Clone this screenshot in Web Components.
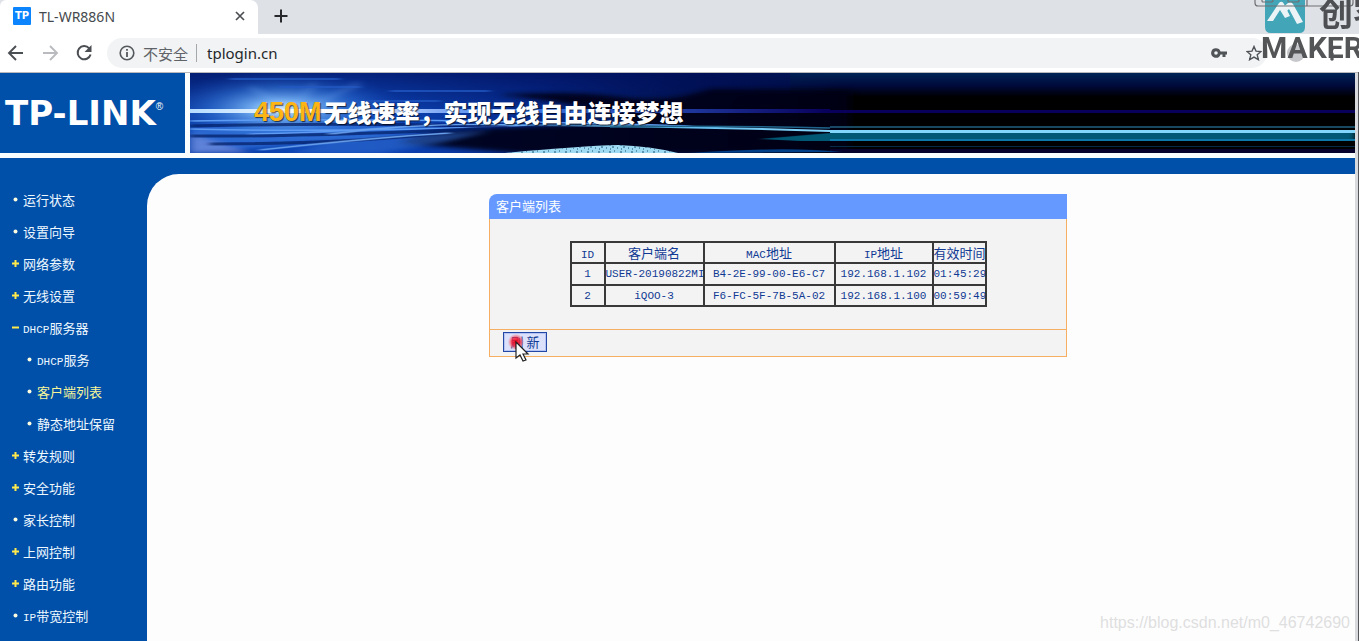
<!DOCTYPE html>
<html lang="zh-CN">
<head>
<meta charset="utf-8">
<title>TL-WR886N</title>
<style>
html,body{margin:0;height:100%}
body{overflow:hidden;background:#fdfdfe;font-family:"Liberation Sans","Noto Sans CJK SC",sans-serif;font-size:13px}
</style>
</head>
<body>
<app-window>
  <browser-tabs slot="chrome">TL-WR886N</browser-tabs>
  <browser-toolbar slot="chrome" address="tplogin.cn">不安全</browser-toolbar>
  <router-banner slot="page"><span slot="hot">450M</span>无线速率，实现无线自由连接梦想</router-banner>
  <router-body slot="page">
    <nav-item slot="nav" kind="dot">运行状态</nav-item>
    <nav-item slot="nav" kind="dot">设置向导</nav-item>
    <nav-item slot="nav" kind="plus">网络参数</nav-item>
    <nav-item slot="nav" kind="plus">无线设置</nav-item>
    <nav-item slot="nav" kind="minus" latin="DHCP">服务器</nav-item>
    <nav-item slot="nav" kind="dot" sub latin="DHCP">服务</nav-item>
    <nav-item slot="nav" kind="dot" sub current>客户端列表</nav-item>
    <nav-item slot="nav" kind="dot" sub>静态地址保留</nav-item>
    <nav-item slot="nav" kind="plus">转发规则</nav-item>
    <nav-item slot="nav" kind="plus">安全功能</nav-item>
    <nav-item slot="nav" kind="dot">家长控制</nav-item>
    <nav-item slot="nav" kind="plus">上网控制</nav-item>
    <nav-item slot="nav" kind="plus">路由功能</nav-item>
    <nav-item slot="nav" kind="dot" latin="IP">带宽控制</nav-item>
    <list-panel>
      <span slot="title">客户端列表</span>
      <client-table></client-table>
      <refresh-button slot="actions">刷 新</refresh-button>
    </list-panel>
  </router-body>
  <maker-mark slot="over"></maker-mark>
  <blog-mark slot="over">https://blog.csdn.net/m0_46742690</blog-mark>
</app-window>
<script>
function define(name, html, setup) {
  const tpl = document.createElement('template');
  tpl.innerHTML = html;
  customElements.define(name, class extends HTMLElement {
    constructor() {
      super();
      this.attachShadow({mode: 'open'}).append(tpl.content.cloneNode(true));
    }
    connectedCallback() { if (setup) setup(this, this.shadowRoot); }
  });
}

define('app-window', `
<style>
:host{display:flex;flex-direction:column;height:100vh;position:relative;overflow:hidden}
.page{flex:1;display:flex;flex-direction:column;min-height:0;border-right:3px solid #d9dade;margin-right:1px}
.edge{position:absolute;right:0;top:72px;bottom:0;width:1px;background:#55565a}
</style>
<slot name="chrome"></slot>
<div class="page"><slot name="page"></slot></div>
<div class="edge"></div>
<slot name="over"></slot>`);

define('browser-tabs', `
<style>
:host{display:flex;align-items:stretch;height:34px;flex:none;background:#dee1e6}
.tab{display:flex;align-items:center;width:258px;box-sizing:border-box;padding:0 12px 2px 13px;gap:8px;background:#fff;border-radius:6px 8px 0 0;color:#45494d;font:14px "Noto Sans",sans-serif}
.name{flex:1}
button{border:0;background:none;padding:0;display:flex}
.add{padding:0 16px 2px;align-items:center}
</style>
<div class="tab">
<svg width="18" height="18"><rect width="18" height="18" rx="1" fill="#0b84fe"/><text x="9" y="12" text-anchor="middle" font-family="DejaVu Sans" font-weight="700" font-size="10" fill="#fff">TP</text></svg>
<span class="name"><slot></slot></span>
<button aria-label="关闭"><svg width="12" height="12" viewBox="0 0 12 12"><path d="M2 2l8 8M10 2l-8 8" stroke="#4b4f53" stroke-width="1.700"/></svg></button>
</div>
<button class="add" aria-label="新标签页"><svg width="14" height="14" viewBox="0 0 14 14"><path d="M7 .5v13M.5 7h13" stroke="#26282b" stroke-width="2"/></svg></button>`);

define('browser-toolbar', `
<style>
:host{display:flex;align-items:center;height:38px;flex:none;background:#fff;border-bottom:1px solid #b9b9bb;padding:0 92px 0 7px;box-sizing:content-box}
.nav{display:flex;gap:16px;padding-right:14px}
button{border:0;background:none;padding:0;display:flex}
form{flex:1;display:flex;align-items:center;height:30px;border-radius:15px;background:#f1f3f4;margin:0;padding:0 5px 0 12px;font:15px "Noto Sans","Noto Sans CJK SC",sans-serif;color:#5f6368}
.state{margin:0 8px}
.sep{width:1px;height:18px;background:#a5a8ab}
input{flex:1;min-width:0;border:0;background:none;padding:0 10px;font:15px "Noto Sans",sans-serif;color:#25282b;outline:0}
.tools{display:flex;gap:19px;align-items:center}
</style>
<div class="nav">
<button aria-label="后退"><svg width="18" height="18" viewBox="0 0 18 18" fill="none" stroke="#4b4e52" stroke-width="1.900"><path d="M16 9H2M9 2L2 9l7 7"/></svg></button>
<button aria-label="前进"><svg width="18" height="18" viewBox="0 0 18 18" fill="none" stroke="#b9bbbe" stroke-width="1.900"><path d="M2 9h14M9 2l7 7-7 7"/></svg></button>
<button aria-label="重新加载"><svg width="18" height="18" viewBox="0 0 18 18"><path d="M14.2 4.3A6.6 6.6 0 1 0 15.6 10.500" fill="none" stroke="#4b4e52" stroke-width="2"/><path d="M16.500 1v7H9.500z" fill="#4b4e52"/></svg></button>
</div>
<form>
<svg width="16" height="16" viewBox="0 0 16 16"><circle cx="8" cy="8" r="6.800" fill="none" stroke="#54575b" stroke-width="1.600"/><path d="M8 7v5M8 4v1.800" stroke="#54575b" stroke-width="1.800"/></svg>
<span class="state"><slot></slot></span><span class="sep"></span>
<input aria-label="地址">
<span class="tools">
<svg width="16" height="12" viewBox="0 0 16 12"><path d="M5 1.200a4.800 4.800 0 1 0 4.500 6.300h2V10h3V7.500H16v-3H9.500A4.800 4.800 0 0 0 5 1.200zm0 3a1.800 1.800 0 1 1 0 3.600 1.800 1.800 0 0 1 0-3.600z" fill="#505357"/></svg>
<svg width="16" height="16" viewBox="0 0 16 16"><path d="M8 1.500l2 4.600 5 .4-3.800 3.300 1.200 4.900L8 12.100l-4.400 2.600 1.200-4.900L1 6.500l5-.4z" fill="none" stroke="#505357" stroke-width="1.400"/></svg>
</span>
</form>`, (el, root) => { root.querySelector('input').value = el.getAttribute('address'); });

define('router-banner', `
<style>
:host{display:grid;grid-template-columns:185px 1fr;gap:5px;height:80px;flex:none;padding-bottom:5px;background:#fafeff}
.brand{background:#004fa8;display:flex;align-items:center;padding-left:5px;color:#fff;font:bold 34px "DejaVu Sans",sans-serif;text-decoration:none}
sup{font:10px "Liberation Sans",sans-serif;align-self:flex-start;margin-top:28px}
.art{display:grid;overflow:hidden;background:#000}
.art>*{grid-area:1/1}
svg{width:100%;height:80px;display:block}
h1{margin:0 0 2px;padding-left:64px;align-self:center;display:flex;align-items:center;font:900 24px/32px "Noto Sans CJK SC",sans-serif;color:#fff;white-space:nowrap;text-shadow:1px 1px 1px #000a;z-index:1}
.hot{font:bold 27px/32px "Liberation Sans",sans-serif;color:#fdb515;padding-right:2px}
</style>
<a class="brand" href="#">TP-LINK<sup>®</sup></a>
<div class="art">
<svg viewBox="0 0 1165 80" preserveAspectRatio="none">
<defs>
<linearGradient id="sky" x2="0" y2="1"><stop offset="0" stop-color="#002456"/><stop offset=".16" stop-color="#00093a"/><stop offset=".3" stop-color="#000"/><stop offset="1" stop-color="#000"/></linearGradient>
<linearGradient id="sea" x2="1" y2="0"><stop offset="0" stop-color="#0a3da5"/><stop offset=".25" stop-color="#0d48bb"/><stop offset=".55" stop-color="#05298a"/><stop offset=".8" stop-color="#01165c" stop-opacity=".8"/><stop offset="1" stop-color="#001a50" stop-opacity="0"/></linearGradient>
<linearGradient id="top" x2="0" y2="1"><stop offset="0" stop-color="#000a52" stop-opacity=".6"/><stop offset="1" stop-color="#000a52" stop-opacity="0"/></linearGradient>
<radialGradient id="sun"><stop offset="0" stop-color="#e8f6ff"/><stop offset=".25" stop-color="#7db9f8" stop-opacity=".85"/><stop offset=".6" stop-color="#3b80e0" stop-opacity=".45"/><stop offset="1" stop-color="#1545b0" stop-opacity="0"/></radialGradient>
<linearGradient id="line" x2="1" y2="0"><stop offset="0" stop-color="#b6dcff"/><stop offset=".2" stop-color="#fff"/><stop offset=".5" stop-color="#3b7cf0"/><stop offset="1" stop-color="#08005a"/></linearGradient>
<linearGradient id="cyan" x2="1" y2="0"><stop offset="0" stop-color="#80c8ff" stop-opacity="0"/><stop offset=".5" stop-color="#5ab5e8"/><stop offset="1" stop-color="#83d6fb"/></linearGradient>
<filter id="b1" x="-20%" y="-50%" width="140%" height="200%"><feGaussianBlur stdDeviation="5 2"/></filter>
<filter id="b2" x="-20%" y="-50%" width="140%" height="200%"><feGaussianBlur stdDeviation="3 .6"/></filter>
<pattern id="foam" width="11" height="7" patternUnits="userSpaceOnUse"><path d="M1 2h2M6 1h1M4 4h2M9 5h1M2 6h1" stroke="#174c72" stroke-width="1"/></pattern>
</defs>
<rect width="1165" height="80" fill="url(#sky)"/>
<rect width="650" height="80" fill="url(#sea)"/>
<rect width="600" height="40" fill="url(#top)"/>
<path d="M310 22Q380 17 430 24T520 16L660 18V80H330L210 70Q240 56 330 54L440 50Q400 30 310 22z" fill="#000112" opacity=".9" filter="url(#b1)"/>
<g filter="url(#b1)">
<path d="M0 54Q150 48 260 54L170 66Q90 72 0 80z" fill="#3478e0" opacity=".75"/>
<path d="M100 80L150 66 300 58 250 70 190 80z" fill="#2c68cc" opacity=".6"/>
<path d="M10 64l50 16H0V62z" fill="#8293dc" opacity=".6"/>
</g>
<ellipse cx="92" cy="36" rx="125" ry="38" fill="url(#sun)"/>
<path d="M100 38L60 14M110 38L170 10M100 38L125 10" stroke="#79aef6" stroke-width="5" opacity=".25" filter="url(#b1)"/>
<rect y="36" width="640" height="4" fill="url(#line)"/><rect x="640" y="37" width="525" height="3" fill="#08005a"/>
<g fill="none" filter="url(#b2)">
<path d="M0 48Q180 44 500 53M0 56q160 4 340-4M60 61q100-2 180-10" stroke="#5f9cf3" stroke-width="1.500"/>
<path d="M0 53q180-4 320 1M0 63q120 1 300-8M20 71q140 0 240-12" stroke="#001761" stroke-width="3" opacity=".7"/>
<path d="M140 61q90-12 190-9M70 77q120-13 190-17" stroke="#6ca4ef" stroke-width="1.300"/>
<path d="M90 14h80M40 6h110M200 18h100M180 28h70" stroke="#2459c4" stroke-width="1.300"/>
</g>
<path d="M270 52Q410 51 640 58" fill="none" stroke="url(#cyan)" stroke-width="2"/>
<path d="M420 54Q520 52 640 55" fill="none" stroke="#1e638a" stroke-width="1.500"/>
<path d="M640 54h525" stroke="#216181" stroke-width="1.500"/>
<path d="M570 66l70-6h525v8H610z" fill="#005875" filter="url(#b2)"/>
<rect x="640" y="57" width="525" height="3" fill="#83d6fb"/>
<rect x="640" y="66" width="525" height="2" fill="#0d78a8"/>
<rect x="640" y="73" width="525" height="1" fill="#052b49"/>
<rect x="640" y="76" width="525" height="4" fill="#06022b"/>
<path d="M500 80q100-7 150-1z" fill="#063f89" filter="url(#b2)"/>
<path d="M315 80Q390 73 428 72q32 1 60 8z" fill="#9fdcf4"/><path d="M315 80Q390 73 428 72q32 1 60 8z" fill="url(#foam)"/>
</svg>
<h1><span class="hot"><slot name="hot"></slot></span><slot></slot></h1>
</div>`);

define('router-body', `
<style>
:host{flex:1;display:grid;grid-template-columns:147px 1fr;min-height:0;background:#004fa8}
nav{padding-top:25px}
main{margin-top:16px;padding:20px 0 0 54px;background:#fdfdfe;border-top-left-radius:32px;display:flex;justify-content:center;align-items:flex-start}
</style>
<nav><slot name="nav"></slot></nav>
<main><slot></slot></main>`);

define('nav-item', `
<style>
:host{display:block;height:32px;padding-left:12px}
:host([sub]){padding-left:26px}
a{display:flex;align-items:center;gap:4px;height:32px;color:#eef8ff;text-decoration:none;font:13px "Noto Sans CJK SC",sans-serif;white-space:nowrap}
:host([current]) a{color:#f6f59a}
svg{width:7px;height:7px;flex:none}
.latin:not(:empty){font:11px/12px "Liberation Mono",monospace}
</style>
<a href="#"><svg viewBox="0 0 7 7"></svg><span><span class="latin"></span><slot></slot></span></a>`, (el, root) => {
  const marks = {
    dot: '<circle cx="3.500" cy="3.500" r="2" fill="#fffde0"/>',
    plus: '<path d="M3.500 0v7M0 3.500h7" stroke="#ffe94d" stroke-width="2"/>',
    minus: '<path d="M0 3.500h7" stroke="#ffe94d" stroke-width="2"/>'
  };
  root.querySelector('svg').innerHTML = marks[el.getAttribute('kind')];
  root.querySelector('.latin').textContent = el.getAttribute('latin') || '';
});

define('list-panel', `
<style>
:host{display:block;width:578px}
header{height:25px;line-height:24px;padding-left:7px;background:#6699ff;border-top-left-radius:8px;color:#fff;font-family:"Noto Sans CJK SC",sans-serif;font-size:13px}
section,footer{border:1px solid #f5ae62;border-top:0;background:#f3f3f3}
section{padding:22px 0;display:flex;justify-content:center}
footer{padding:2px 13px 4px;display:flex}
</style>
<header><slot name="title"></slot></header>
<section><slot></slot></section>
<footer><slot name="actions"></slot></footer>`);

define('client-table', `
<style>
:host{display:block}
table{border-collapse:collapse;table-layout:fixed;width:417px;color:#103a94;text-align:center}
th,td{border:2px solid #393939;padding:0;height:19px;line-height:18px;white-space:nowrap;font-weight:400}
tbody tr:first-child td{height:20px}
th{font-family:"Noto Sans CJK SC",sans-serif;font-size:13px}
td,th span{font-family:"Liberation Mono",monospace;font-size:11px}
th span{line-height:12px}
.id{width:32px}.name{width:97px}.mac{width:129px}.ip{width:96px}
</style>
<table>
<thead><tr><th class="id"><span>ID</span></th><th class="name">客户端名</th><th class="mac"><span>MAC</span>地址</th><th class="ip"><span>IP</span>地址</th><th>有效时间</th></tr></thead>
<tbody>
<tr><td>1</td><td>USER-20190822MI</td><td>B4-2E-99-00-E6-C7</td><td>192.168.1.102</td><td>01:45:29</td></tr>
<tr><td>2</td><td>iQOO-3</td><td>F6-FC-5F-7B-5A-02</td><td>192.168.1.100</td><td>00:59:49</td></tr>
</tbody>
</table>`);

define('refresh-button', `
<style>
:host{display:block;position:relative}
button{display:block;width:44px;height:20px;padding:0;border:1px solid #2347a5;background:#dbe1fa;color:#103a94;font:13px/18px "Noto Sans CJK SC",sans-serif;box-shadow:inset 0 0 0 1px #b5c4f3}
svg{position:absolute;left:3px;top:0}
</style>
<button><slot></slot></button>
<svg width="26" height="32" viewBox="0 0 26 32"><defs><radialGradient id="r"><stop offset="0" stop-color="#f00018"/><stop offset=".55" stop-color="#f82038" stop-opacity=".8"/><stop offset="1" stop-color="#ff7080" stop-opacity=".1"/></radialGradient></defs><circle cx="10" cy="10" r="8" fill="url(#r)"/><path d="M10 10v16l4-3 3 6 3-1-3-6h5z" fill="#fff" stroke="#222" stroke-width="1.200"/></svg>`);

define('maker-mark', `
<style>
:host{position:absolute;left:calc(100% - 105px);top:0;width:105px;height:66px;overflow:hidden;color:#2e3032;opacity:.82;pointer-events:none}
svg{position:absolute;left:0;top:0}
.cn{position:absolute;left:65px;top:-4px;font:bold 34px/32px "Noto Sans CJK SC",sans-serif;white-space:nowrap}
.en{position:absolute;left:7px;top:36px;font:bold 30px/24px Roboto,sans-serif}
</style>
<svg width="105" height="66" viewBox="0 0 105 66"><circle cx="42" cy="53" r="9" fill="#b9bbc0"/><g fill="#303236"><circle cx="78" cy="49" r="1.800"/><circle cx="78" cy="54" r="1.800"/><circle cx="78" cy="59" r="1.800"/></g><path d="M11-5h40v32q0 6-6 6H17q-6 0-6-6z" fill="#2098ae"/><path d="M13 21L25 3q3-3 5 1l6 12-5 2-5-8-7 11zM27 9l7-6q3-2 5 1l10 18-6 2-8-15-4 4z" fill="#eef8fa"/><path d="M1-2v5q0 3 3 3h92q3 0 3-3v-5M8-2v3q0 1 1 1h8q2 0 2-2M34-2v3q0 1 1 1h8q2 0 2-2M53 0v6M72-3l8 6M80-3l-8 6" fill="none" stroke="#56585b" stroke-width="1.200"/></svg>
<span class="cn">创客</span><span class="en">MAKER</span>`);

define('blog-mark', `
<style>
:host{position:absolute;right:9px;bottom:8px;font:16px/20px "Liberation Sans",sans-serif;color:#dfdfdf;pointer-events:none}
</style><slot></slot>`);
</script>
</body>
</html>
